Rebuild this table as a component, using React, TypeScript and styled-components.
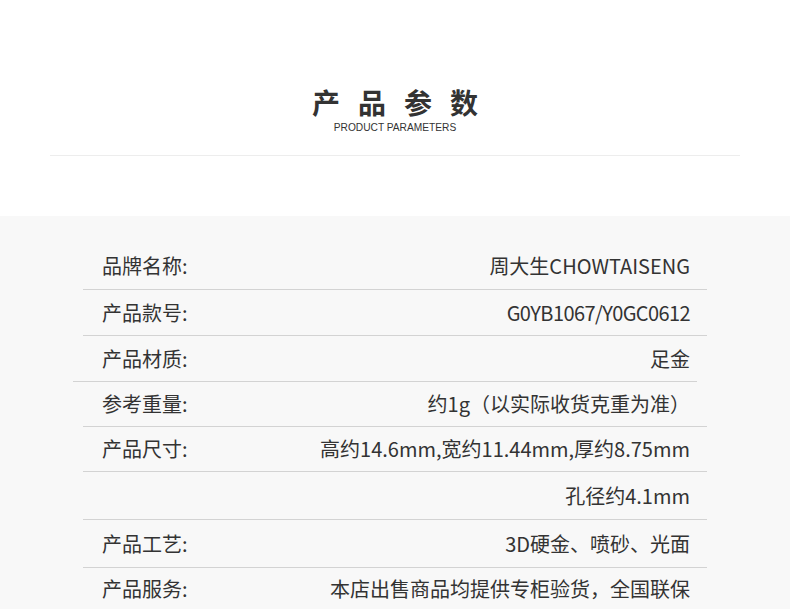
import React from "react";
import styled, { createGlobalStyle } from "styled-components";

const Global = createGlobalStyle`
  html, body { margin: 0; padding: 0; background: #ffffff; }
  body { font-family: "Noto Sans CJK SC", "Noto Sans", sans-serif; }
`;

const Page = styled.div`
  width: 790px;
  display: flex;
  flex-direction: column;
`;

const Header = styled.header`
  height: 216px;
  background: #ffffff;
  display: flex;
  flex-direction: column;
  align-items: center;
  padding-top: 87px;
  box-sizing: border-box;
`;

const Title = styled.h1`
  margin: 0;
  font-family: "Noto Sans CJK SC", sans-serif;
  font-weight: 700;
  font-size: 28px;
  line-height: 30px;
  letter-spacing: 18px;
  padding-left: 18px;
  color: #333333;
`;

const Subtitle = styled.div`
  margin-top: 5px;
  font-family: "Liberation Sans", Arial, sans-serif;
  font-size: 10.2px;
  line-height: 12px;
  color: #333333;
`;

const HeaderRule = styled.div`
  margin-top: 21px;
  width: 690px;
  height: 1px;
  background: #ededed;
`;

const Specs = styled.section`
  background: #f8f8f8;
  padding: 27px 83px 0;
  display: flex;
  flex-direction: column;
`;

const Row = styled.div<{ $h: number }>`
  height: ${(p) => p.$h}px;
  display: flex;
  align-items: center;
  justify-content: space-between;
  padding: 0 17px 0 19px;
  font-size: 20px;
  line-height: 1;
  color: #333333;
`;

const Label = styled.span`
  white-space: nowrap;
`;

const Value = styled.span<{ $tight?: boolean }>`
  white-space: nowrap;
  text-align: right;
  margin-left: auto;
  letter-spacing: ${(p) => (p.$tight ? "-0.6px" : "0")};
`;

const Rule = styled.div<{ $shift?: number }>`
  height: 1px;
  background: #d3d3d3;
  margin-left: ${(p) => p.$shift ?? 0}px;
  margin-right: ${(p) => -(p.$shift ?? 0)}px;
`;

type Spec = { label?: string; value: string; h: number; shift?: number; tight?: boolean; last?: boolean };

const specs: Spec[] = [
  { label: "品牌名称:", value: "周大生CHOWTAISENG", h: 46 },
  { label: "产品款号:", value: "G0YB1067/Y0GC0612", h: 45, tight: true },
  { label: "产品材质:", value: "足金", h: 45, shift: -10 },
  { label: "参考重量:", value: "约1g（以实际收货克重为准）", h: 44 },
  { label: "产品尺寸:", value: "高约14.6mm,宽约11.44mm,厚约8.75mm", h: 44 },
  { value: "孔径约4.1mm", h: 47 },
  { label: "产品工艺:", value: "3D硬金、喷砂、光面", h: 47 },
  { label: "产品服务:", value: "本店出售商品均提供专柜验货，全国联保", h: 41, last: true },
];

export default function App() {
  return (
    <Page>
      <Global />
      <Header>
        <Title>产品参数</Title>
        <Subtitle>PRODUCT PARAMETERS</Subtitle>
        <HeaderRule />
      </Header>
      <Specs>
        {specs.map((s, i) => (
          <React.Fragment key={i}>
            <Row $h={s.h}>
              {s.label && <Label>{s.label}</Label>}
              <Value $tight={s.tight}>{s.value}</Value>
            </Row>
            {!s.last && <Rule $shift={s.shift} />}
          </React.Fragment>
        ))}
      </Specs>
    </Page>
  );
}
